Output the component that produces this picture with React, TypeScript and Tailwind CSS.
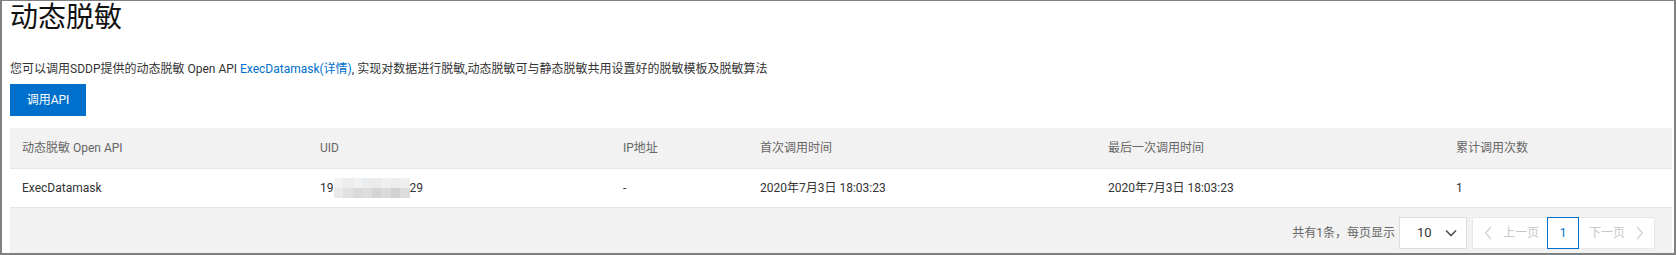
import React from "react";

const FONT = "font-['Roboto','Noto_Sans_CJK_SC',sans-serif]";

const mosaicTop = ["#f3f3f3", "#ececec", "#f1f1f1", "#e9edf0", "#ebebeb", "#f0f0f0", "#ececec", "#efefef"];
const mosaicBottom = ["#e9e9e9", "#e1e1e1", "#dadada", "#dddddd", "#d4d4d4", "#dadada", "#d2d2d2", "#dcdcdc"];

function Mosaic() {
  return (
    <span className="inline-flex flex-col align-middle w-[76px] h-5">
      <span className="flex h-[10px]">
        {mosaicTop.map((c, i) => (
          <span key={i} className="h-full flex-1" style={{ backgroundColor: c }} />
        ))}
      </span>
      <span className="flex h-[10px]">
        {mosaicBottom.map((c, i) => (
          <span key={i} className="h-full flex-1" style={{ backgroundColor: c }} />
        ))}
      </span>
    </span>
  );
}

function ChevronDown() {
  return (
    <svg width="12" height="8" viewBox="0 0 12 8" fill="none">
      <path d="M1 1.5 L6 6.5 L11 1.5" stroke="#555" strokeWidth="1.6" />
    </svg>
  );
}

function ChevronLeft() {
  return (
    <svg width="8" height="14" viewBox="0 0 8 14" fill="none">
      <path d="M7 1 L1.5 7 L7 13" stroke="#d6d6d6" strokeWidth="1.6" />
    </svg>
  );
}

function ChevronRight() {
  return (
    <svg width="8" height="14" viewBox="0 0 8 14" fill="none">
      <path d="M1 1 L6.5 7 L1 13" stroke="#d6d6d6" strokeWidth="1.6" />
    </svg>
  );
}

const cols = "grid grid-cols-[298px_303px_137px_348px_348px_1fr]";

export default function App() {
  return (
    <div
      className={`${FONT} w-[1676px] h-[255px] overflow-hidden bg-white border-t border-l-2 border-r-2 border-b-2 border-[#808080] flex flex-col pl-2 pr-[2px] text-[#333]`}
    >
      <h1 className="-mt-[6px] text-[28px] leading-[41px] font-normal text-[#111] font-['Noto_Sans_CJK_SC',sans-serif]">
        动态脱敏
      </h1>
      <p className="mt-[23px] text-xs leading-5 text-[#333]">
        您可以调用SDDP提供的动态脱敏 Open API{" "}
        <span className="text-[#0070cc]">ExecDatamask(详情)</span>, 实现对数据进行脱敏,动态脱敏可与静态脱敏共用设置好的脱敏模板及脱敏算法
      </p>
      <div className="mt-[5px]">
        <button className="w-[76px] h-8 bg-[#0070cc] text-white text-xs">调用API</button>
      </div>
      <div className="mt-3 flex flex-col text-xs">
        <div className={`${cols} h-10 items-center bg-[#f2f2f2] text-[#666]`}>
          <div className="px-3">动态脱敏 Open API</div>
          <div className="px-3">UID</div>
          <div className="px-3">IP地址</div>
          <div className="px-3">首次调用时间</div>
          <div className="px-3">最后一次调用时间</div>
          <div className="px-3">累计调用次数</div>
        </div>
        <div className={`${cols} h-[39px] items-center border-t border-[#e8e8e8] text-[#333]`}>
          <div className="px-3">ExecDatamask</div>
          <div className="px-3 flex items-center">
            <span>19</span>
            <Mosaic />
            <span>29</span>
          </div>
          <div className="px-3">-</div>
          <div className="px-3">2020年7月3日 18:03:23</div>
          <div className="px-3">2020年7月3日 18:03:23</div>
          <div className="px-3">1</div>
        </div>
        <div className="h-[60px] border-t border-[#e5e5e5] bg-[#f2f2f2] flex items-start justify-end pt-[9px] pr-[17px]">
          <div className="flex items-center h-8">
            <span className="text-[#666] mr-1">共有1条，每页显示</span>
            <div className="w-[68px] h-8 bg-white border border-[#dcdcdc] flex items-center pl-[17px] pr-[9px] justify-between text-[#333] text-[13px]">
              <span>10</span>
              <ChevronDown />
            </div>
            <div className="ml-[5px] h-8 flex bg-white border border-[#e8e8e8]">
              <div className="w-[74px] flex items-center pl-[11px] gap-[11px] text-[#c8c8c8] text-xs">
                <ChevronLeft />
                <span>上一页</span>
              </div>
              <div className="w-8 -my-px h-8 border border-[#0070cc] flex items-center justify-center text-[#0070cc]">
                1
              </div>
              <div className="w-[75px] flex items-center pl-[10px] gap-[11px] text-[#c8c8c8] text-xs">
                <span>下一页</span>
                <ChevronRight />
              </div>
            </div>
          </div>
        </div>
      </div>
    </div>
  );
}
